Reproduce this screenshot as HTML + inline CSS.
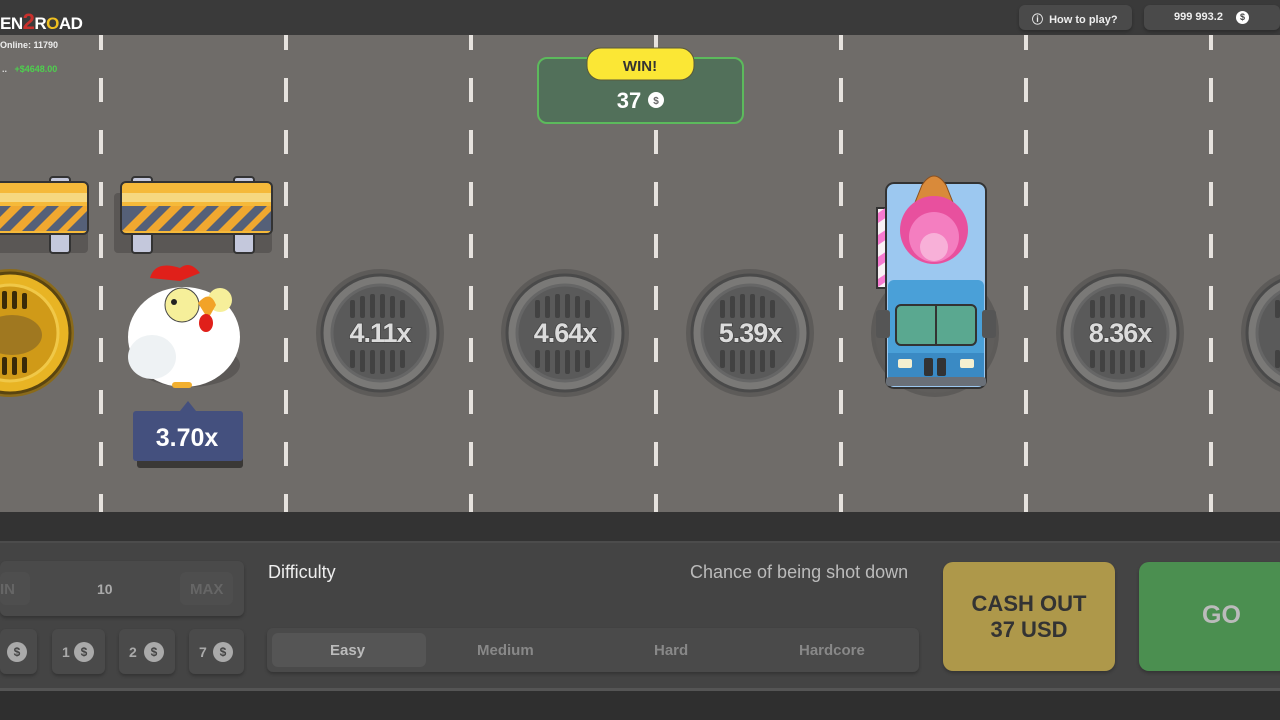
<!DOCTYPE html>
<html><head><meta charset="utf-8"><style>
*{margin:0;padding:0;box-sizing:border-box}
body{width:1280px;height:720px;overflow:hidden;background:#2f2f2f;font-family:"Liberation Sans",sans-serif;position:relative}
.top{position:absolute;left:0;top:0;width:1280px;height:35px;background:#3a3a3a}
.road{position:absolute;left:0;top:35px;width:1280px;height:477px;background:#6f6c69}
.mid{position:absolute;left:0;top:512px;width:1280px;height:29px;background:#333}
.panel{position:absolute;left:0;top:541px;width:1280px;height:150px;background:#444;border-top:2px solid #4c4c4c;border-bottom:3px solid #555}
.pill{position:absolute;background:#4a4a4a;border-radius:6px;box-shadow:0 2px 3px rgba(0,0,0,.25)}
.t{position:absolute;font-weight:bold}
svg text{font-family:"Liberation Sans",sans-serif;font-weight:700}
</style></head><body>
<div class="top"></div>
<div class="t" style="left:0;top:9px;font-size:17px;color:#fff;letter-spacing:-.5px">EN<span style="color:#c9302c;font-size:22px">2</span>R<span style="color:#f0c020">O</span>AD</div>
<div class="pill" style="left:1019px;top:5px;width:113px;height:25px;background:#4a4a4a"></div>
<div class="t" style="left:1032px;top:11px;font-size:11px;color:#eee">ⓘ&nbsp; How to play?</div>
<div class="pill" style="left:1144px;top:5px;width:136px;height:25px"></div>
<div class="t" style="left:1174px;top:11px;font-size:11px;color:#eee">999 993.2</div>
<div style="position:absolute;left:1236px;top:11px;width:13px;height:13px;border-radius:50%;background:#fff;color:#444;font-size:9px;font-weight:bold;text-align:center;line-height:13px">$</div>
<div class="road"></div>
<svg style="position:absolute;left:0;top:35px" width="1280" height="477">
<defs><pattern id="d" width="4" height="52" patternUnits="userSpaceOnUse" y="-9"><rect width="4" height="24" fill="#e6e2de"/></pattern></defs>
<rect x="99" width="4" height="477" fill="url(#d)"/>
<rect x="284" width="4" height="477" fill="url(#d)"/>
<rect x="469" width="4" height="477" fill="url(#d)"/>
<rect x="654" width="4" height="477" fill="url(#d)"/>
<rect x="839" width="4" height="477" fill="url(#d)"/>
<rect x="1024" width="4" height="477" fill="url(#d)"/>
<rect x="1209" width="4" height="477" fill="url(#d)"/>
<g id="m">
<circle cx="380" cy="298" r="64" fill="#5d5b59"/>
<circle cx="380" cy="298" r="58" fill="#7a7977" stroke="#4a4a4a" stroke-width="3"/>
<circle cx="380" cy="298" r="48" fill="#5a5a5a" stroke="#666" stroke-width="3"/>
<g fill="#424242"><rect x="350" y="265" width="5" height="18" rx="2"/><rect x="360" y="261" width="5" height="22" rx="2"/><rect x="370" y="259" width="5" height="24" rx="2"/><rect x="380" y="259" width="5" height="24" rx="2"/><rect x="390" y="261" width="5" height="22" rx="2"/><rect x="400" y="265" width="5" height="18" rx="2"/>
<rect x="350" y="315" width="5" height="18" rx="2"/><rect x="360" y="315" width="5" height="22" rx="2"/><rect x="370" y="315" width="5" height="24" rx="2"/><rect x="380" y="315" width="5" height="24" rx="2"/><rect x="390" y="315" width="5" height="22" rx="2"/><rect x="400" y="315" width="5" height="18" rx="2"/></g>
</g>
<use href="#m" x="185"/><use href="#m" x="370"/><use href="#m" x="555"/><use href="#m" x="740"/><use href="#m" x="925"/>
<g font-size="27" fill="#dcdcdc" stroke="#444" stroke-width="1.5" text-anchor="middle" letter-spacing="-1" paint-order="stroke">
<text x="380" y="307">4.11x</text><text x="565" y="307">4.64x</text><text x="750" y="307">5.39x</text><text x="1120" y="307">8.36x</text><text x="1300" y="307">12</text></g>
<circle cx="10" cy="298" r="64" fill="#8a6a1a"/>
<circle cx="10" cy="298" r="60" fill="#e8b424" stroke="#5a4510" stroke-width="3"/>
<circle cx="10" cy="298" r="48" fill="#d09a18" stroke="#f0c848" stroke-width="3"/>
<g fill="#3a2a08"><rect x="-8" y="258" width="5" height="16" rx="2"/><rect x="2" y="256" width="5" height="18" rx="2"/><rect x="12" y="256" width="5" height="18" rx="2"/><rect x="22" y="258" width="5" height="16" rx="2"/><rect x="-8" y="322" width="5" height="16" rx="2"/><rect x="2" y="322" width="5" height="18" rx="2"/><rect x="12" y="322" width="5" height="18" rx="2"/><rect x="22" y="322" width="5" height="16" rx="2"/></g>
<ellipse cx="12" cy="300" rx="30" ry="20" fill="#a07820"/>
<g id="b"><rect x="114" y="158" width="158" height="60" rx="4" fill="#5a5755"/>
<rect x="132" y="142" width="20" height="76" rx="3" fill="#c4c8dc" stroke="#333" stroke-width="2"/>
<rect x="234" y="142" width="20" height="76" rx="3" fill="#c4c8dc" stroke="#333" stroke-width="2"/>
<rect x="121" y="147" width="151" height="52" rx="5" fill="#f5b93a" stroke="#333" stroke-width="2"/>
<rect x="122" y="158" width="149" height="9" fill="#f6d880"/>
<rect x="122" y="171" width="149" height="25" fill="#556078"/>
<g fill="#f0a830"><path d="M122 196l25-25h12l-25 25z"/><path d="M146 196l25-25h12l-25 25z"/><path d="M170 196l25-25h12l-25 25z"/><path d="M194 196l25-25h12l-25 25z"/><path d="M218 196l25-25h12l-25 25z"/><path d="M242 196l25-25h4v5l-20 20z"/></g>
</g>
<use href="#b" x="-184"/>
<ellipse cx="188" cy="330" rx="52" ry="22" fill="#5b5856"/>
<path d="M150 243q5-18 30-10q10-8 20 5l-20 8z" fill="#e0201a"/>
<ellipse cx="184" cy="302" rx="56" ry="50" fill="#fff"/>
<ellipse cx="152" cy="322" rx="24" ry="22" fill="#eef2f4"/>
<circle cx="182" cy="270" r="17" fill="#f6ef9a" stroke="#444" stroke-width="1"/>
<circle cx="220" cy="265" r="12" fill="#f6ef9a"/>
<circle cx="174" cy="267" r="3" fill="#222"/>
<path d="M198 268q12-14 18 2l-8 14z" fill="#f2a328"/>
<ellipse cx="206" cy="288" rx="7" ry="9" fill="#e0201a"/>
<rect x="172" y="347" width="20" height="6" rx="3" fill="#f2b030"/>
<rect x="137" y="381" width="106" height="52" rx="3" fill="#3a3836"/>
<path d="M180 376l8-10 8 10z" fill="#44507e"/>
<rect x="133" y="376" width="110" height="50" rx="3" fill="#44507e"/>
<text x="187" y="411" font-size="25" fill="#fff" text-anchor="middle">3.70x</text>
<circle cx="935" cy="298" r="60" fill="#5f5d5b"/>
<rect x="877" y="173" width="14" height="80" fill="#f8f0f4" stroke="#333" stroke-width="2"/>
<g fill="#f67ad0"><path d="M878 178l12-8v10l-12 8z"/><path d="M878 200l12-8v10l-12 8z"/><path d="M878 222l12-8v10l-12 8z"/><path d="M878 244l12-8v8l-12 8z"/></g>
<rect x="886" y="148" width="100" height="205" rx="8" fill="#9cc8f0" stroke="#333" stroke-width="2"/>
<rect x="888" y="245" width="96" height="106" rx="6" fill="#4aa0d8"/>
<path d="M922 150q12-18 24 0l16 40h-56z" fill="#d98a3a" stroke="#8a5020" stroke-width="1"/>
<circle cx="934" cy="195" r="34" fill="#e8509e"/>
<circle cx="934" cy="202" r="25" fill="#f47ec0"/>
<circle cx="934" cy="212" r="14" fill="#f8b0d8"/>
<rect x="876" y="275" width="14" height="28" rx="3" fill="#555"/><rect x="982" y="275" width="14" height="28" rx="3" fill="#555"/>
<rect x="896" y="270" width="80" height="40" rx="5" fill="#5aa890" stroke="#333" stroke-width="2"/>
<line x1="936" y1="270" x2="936" y2="310" stroke="#333" stroke-width="2"/>
<rect x="888" y="318" width="96" height="24" fill="#3a8ac4"/>
<rect x="898" y="324" width="14" height="9" rx="2" fill="#f4f0d0"/><rect x="960" y="324" width="14" height="9" rx="2" fill="#f4f0d0"/>
<rect x="924" y="323" width="9" height="18" rx="2" fill="#333"/><rect x="937" y="323" width="9" height="18" rx="2" fill="#333"/>
<rect x="886" y="342" width="100" height="9" rx="3" fill="#6a7078"/>
<rect x="538" y="23" width="205" height="65" rx="9" fill="#52705a" stroke="#5cba5c" stroke-width="2"/>
<rect x="587" y="13" width="107" height="32" rx="14" fill="#fbe735" stroke="#5a5a3a" stroke-width="1"/>
<text x="640" y="36" font-size="15" fill="#333" text-anchor="middle">WIN!</text>
<text x="629" y="73" font-size="22" fill="#fff" text-anchor="middle">37</text>
<circle cx="656" cy="65" r="8" fill="#fff"/><text x="656" y="69" font-size="10" fill="#666" text-anchor="middle">$</text>
</svg>
<div class="t" style="left:0;top:40px;font-size:9px;color:#eee">Online: 11790</div>
<div class="t" style="left:2px;top:64px;font-size:9px;color:#ddd">.. &nbsp;&nbsp;<span style="color:#4ed04e">+$4648.00</span></div>
<div class="mid"></div>
<div class="panel"></div>
<div class="pill" style="left:0;top:561px;width:244px;height:55px"></div>
<div class="pill" style="left:0;top:572px;width:30px;height:33px;background:#4e4e4e;box-shadow:none"></div>
<div class="t" style="left:0;top:581px;font-size:15px;color:#666">IN</div>
<div class="t" style="left:97px;top:581px;font-size:14px;color:#aaa">10</div>
<div class="pill" style="left:180px;top:572px;width:53px;height:33px;background:#4e4e4e;box-shadow:none"></div>
<div class="t" style="left:190px;top:581px;font-size:15px;color:#666">MAX</div>
<div class="pill" style="left:0;top:629px;width:37px;height:45px"></div>
<div class="pill" style="left:52px;top:629px;width:53px;height:45px"></div>
<div class="pill" style="left:119px;top:629px;width:56px;height:45px"></div>
<div class="pill" style="left:189px;top:629px;width:55px;height:45px"></div>
<div class="t" style="left:62px;top:644px;font-size:14px;color:#aaa">1</div>
<div class="t" style="left:129px;top:644px;font-size:14px;color:#aaa">2</div>
<div class="t" style="left:199px;top:644px;font-size:14px;color:#aaa">7</div>
<div style="position:absolute;left:7px;top:642px;width:20px;height:20px;border-radius:50%;background:#aaa;color:#444;font-weight:bold;font-size:12px;text-align:center;line-height:20px">$</div>
<div style="position:absolute;left:74px;top:642px;width:20px;height:20px;border-radius:50%;background:#aaa;color:#444;font-weight:bold;font-size:12px;text-align:center;line-height:20px">$</div>
<div style="position:absolute;left:144px;top:642px;width:20px;height:20px;border-radius:50%;background:#aaa;color:#444;font-weight:bold;font-size:12px;text-align:center;line-height:20px">$</div>
<div style="position:absolute;left:213px;top:642px;width:20px;height:20px;border-radius:50%;background:#aaa;color:#444;font-weight:bold;font-size:12px;text-align:center;line-height:20px">$</div>
<div style="position:absolute;left:268px;top:562px;font-size:18px;color:#eee">Difficulty</div>
<div style="position:absolute;left:690px;top:562px;font-size:18px;color:#bbb">Chance of being shot down</div>
<div class="pill" style="left:267px;top:628px;width:652px;height:44px"></div>
<div class="pill" style="left:272px;top:633px;width:154px;height:34px;background:#555;box-shadow:none"></div>
<div class="t" style="left:330px;top:642px;font-size:15px;color:#bbb">Easy</div>
<div class="t" style="left:477px;top:642px;font-size:15px;color:#888">Medium</div>
<div class="t" style="left:654px;top:642px;font-size:15px;color:#888">Hard</div>
<div class="t" style="left:799px;top:642px;font-size:15px;color:#888">Hardcore</div>
<div class="pill" style="left:943px;top:562px;width:172px;height:109px;background:#ae984a;border-radius:10px"></div>
<div class="t" style="left:943px;top:591px;width:172px;text-align:center;font-size:22px;color:#333;line-height:26px">CASH OUT<br>37 USD</div>
<div class="pill" style="left:1139px;top:562px;width:150px;height:109px;background:#4b8f50;border-radius:10px"></div>
<div class="t" style="left:1202px;top:601px;font-size:25px;color:#bbb">GO</div>
</body></html>
